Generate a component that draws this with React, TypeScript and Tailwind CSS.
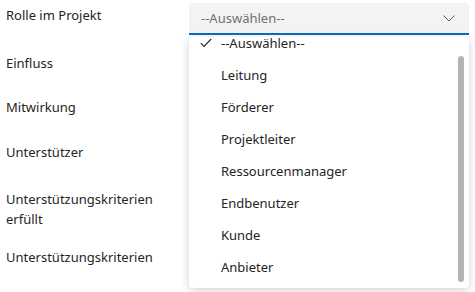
import React from 'react';

const labels: { text: React.ReactNode; mt: string }[] = [
  { text: 'Rolle im Projekt', mt: 'mt-0' },
  { text: 'Einfluss', mt: 'mt-[28px]' },
  { text: 'Mitwirkung', mt: 'mt-[24px]' },
  { text: 'Unterstützer', mt: 'mt-[25px]' },
  { text: <>Unterstützungskriterien<br />erfüllt</>, mt: 'mt-[27px]' },
  { text: 'Unterstützungskriterien', mt: 'mt-[18px]' },
];

const options = [
  '--Auswählen--',
  'Leitung',
  'Förderer',
  'Projektleiter',
  'Ressourcenmanager',
  'Endbenutzer',
  'Kunde',
  'Anbieter',
];

export default function App() {
  return (
    <div
      className="relative w-[475px] h-[292px] bg-white overflow-hidden text-[#242424] text-[13px] leading-[20px]"
      style={{ fontFamily: '"Noto Sans", "Open Sans", sans-serif' }}
    >
      {/* Labels */}
      <div className="flex flex-col pl-[6px] pt-[5px]">
        {labels.map((l, i) => (
          <div key={i} className={l.mt}>
            {l.text}
          </div>
        ))}
      </div>

      {/* Select trigger */}
      <div className="absolute left-[189px] top-[3px] w-[280px] h-[32px] bg-[#f3f3f3] rounded-t-[4px] border-b-2 border-[#0f6cbd] flex items-center justify-between pl-[12px] pr-[14px]">
        <span className="text-[#707070]">--Auswählen--</span>
        <svg width="12" height="7" viewBox="0 0 12 7" fill="none">
          <path d="M0.5 0.5 L6 6 L11.5 0.5" stroke="#616161" strokeWidth="1" />
        </svg>
      </div>

      {/* Dropdown list */}
      <div className="absolute left-[189px] top-[37px] w-[280px] h-[251px] bg-white rounded-[4px] shadow-[0_2px_8px_rgba(0,0,0,0.18)] overflow-hidden">
        <div className="-mt-[10px]">
          {options.map((o, i) => (
            <div key={o} className="h-[32px] flex items-center">
              <span className="w-[32px] flex justify-center pl-[2px]">
                {i === 0 && (
                  <svg width="12" height="10" viewBox="0 0 12 10" fill="none">
                    <path d="M0.8 5.2 L4 8.4 L11.2 1" stroke="#242424" strokeWidth="1.1" />
                  </svg>
                )}
              </span>
              <span>{o}</span>
            </div>
          ))}
        </div>
        <div className="absolute left-[269px] top-[19px] w-[6px] h-[226px] rounded-full bg-[#b4b4b4]" />
      </div>
    </div>
  );
}
